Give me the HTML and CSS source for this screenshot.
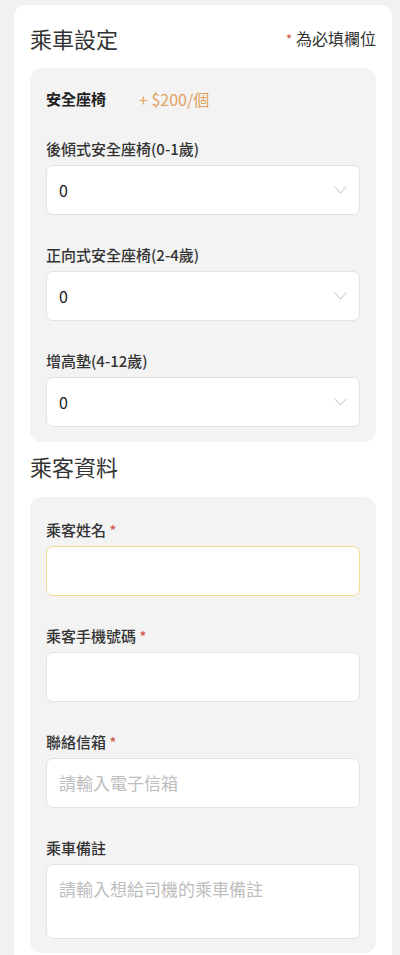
FILE: index.html
```html
<!DOCTYPE html>
<html lang="zh-Hant">
<head>
<meta charset="utf-8">
<title>乘車設定</title>
<link rel="stylesheet" href="styles.css">
</head>
<body>
<div class="page">
  <div class="card">
    <div class="section-head">
      <h2 class="section-title">乘車設定</h2>
      <div class="required-note"><span class="star">*</span> 為必填欄位</div>
    </div>

    <div class="panel panel-seats">
      <div class="panel-head">
        <span class="panel-title">安全座椅</span>
        <span class="price">+ $200/個</span>
      </div>
      <div class="fields">
        <div class="field">
          <div class="label">後傾式安全座椅(0-1歲)</div>
          <div class="select">
            <span class="value">0</span>
            <svg class="chev" width="13" height="8" viewBox="0 0 13 8"><polyline points="0.5,0.5 6.5,7 12.5,0.5" fill="none" stroke="#cccccc" stroke-width="1.1"/></svg>
          </div>
        </div>
        <div class="field">
          <div class="label">正向式安全座椅(2-4歲)</div>
          <div class="select">
            <span class="value">0</span>
            <svg class="chev" width="13" height="8" viewBox="0 0 13 8"><polyline points="0.5,0.5 6.5,7 12.5,0.5" fill="none" stroke="#cccccc" stroke-width="1.1"/></svg>
          </div>
        </div>
        <div class="field">
          <div class="label">增高墊(4-12歲)</div>
          <div class="select">
            <span class="value">0</span>
            <svg class="chev" width="13" height="8" viewBox="0 0 13 8"><polyline points="0.5,0.5 6.5,7 12.5,0.5" fill="none" stroke="#cccccc" stroke-width="1.1"/></svg>
          </div>
        </div>
      </div>
    </div>

    <h2 class="section-title section-title-2">乘客資料</h2>

    <div class="panel panel-passenger">
      <div class="fields">
        <div class="field">
          <div class="label">乘客姓名 <span class="star">*</span></div>
          <div class="box box-focus"><input class="input" type="text"></div>
        </div>
        <div class="field">
          <div class="label">乘客手機號碼 <span class="star">*</span></div>
          <div class="box"><input class="input" type="text"></div>
        </div>
        <div class="field">
          <div class="label">聯絡信箱 <span class="star">*</span></div>
          <div class="box"><input class="input" type="text" placeholder="請輸入電子信箱"></div>
        </div>
        <div class="field">
          <div class="label">乘車備註</div>
          <div class="box box-area"><textarea class="input textarea" placeholder="請輸入想給司機的乘車備註"></textarea></div>
        </div>
      </div>
    </div>
  </div>
</div>
</body>
</html>
```

FILE: styles.css
```css
* {
  box-sizing: border-box;
}

html, body {
  margin: 0;
  padding: 0;
}

body {
  background: #f1f1f1;
  font-family: "Noto Sans CJK TC", "Noto Sans", sans-serif;
  color: #333;
}

.page {
  padding: 5px 8px 0 14px;
}

.card {
  background: #fff;
  border-radius: 12px 12px 0 0;
  padding: 18px 16px 20px;
}

.section-head {
  display: flex;
  justify-content: space-between;
  align-items: center;
  height: 30px;
}

.section-title {
  margin: 0;
  font-size: 22px;
  line-height: 30px;
  font-weight: 400;
  color: #333;
}

.section-title-2 {
  margin-top: 9px;
}

.required-note {
  font-size: 16px;
  line-height: 22px;
  color: #333;
}

.star {
  color: #d0584d;
  font-size: 14px;
}

.panel {
  background: #f3f3f3;
  border-radius: 12px;
  padding: 20px 16px 15px;
}

.panel-seats {
  margin-top: 15px;
}

.panel-passenger {
  margin-top: 16px;
  padding-top: 22px;
  padding-bottom: 14px;
}

.panel-head {
  display: flex;
  align-items: center;
  height: 22px;
  margin-bottom: 28px;
}

.panel-title {
  font-size: 15px;
  font-weight: 700;
  line-height: 22px;
  color: #222;
}

.price {
  margin-left: 33px;
  font-size: 16px;
  line-height: 22px;
  color: #e2a263;
}

.fields {
  display: flex;
  flex-direction: column;
  gap: 29px;
}

.field {
  display: flex;
  flex-direction: column;
}

.label {
  font-size: 15px;
  line-height: 22px;
  font-weight: 500;
  color: #333;
  margin-bottom: 5px;
}

.select {
  height: 50px;
  background: #fff;
  border: 1px solid #e2e2e2;
  border-radius: 7px;
  display: flex;
  align-items: center;
  justify-content: space-between;
  padding: 0 12px 0 12px;
}

.value {
  font-size: 16px;
  color: #222;
}

.box {
  height: 50px;
  background: #fff;
  border: 1px solid #e2e2e2;
  border-radius: 7px;
  padding: 0 12px;
  display: flex;
  align-items: center;
}

.box-focus {
  border: 1.5px solid #f2da8c;
}

.box-area {
  height: 75px;
  align-items: stretch;
  padding: 12px 12px 4px;
}

.input {
  display: block;
  width: 100%;
  margin: 0;
  padding: 0;
  border: 0;
  background: transparent;
  font-family: "Noto Sans CJK TC", "Noto Sans", sans-serif;
  font-size: 17px;
  line-height: 24px;
  height: 24px;
  color: #333;
  outline: none;
}

.input::placeholder {
  color: #bdbdbd;
}

.textarea {
  height: auto;
  resize: none;
}
```
